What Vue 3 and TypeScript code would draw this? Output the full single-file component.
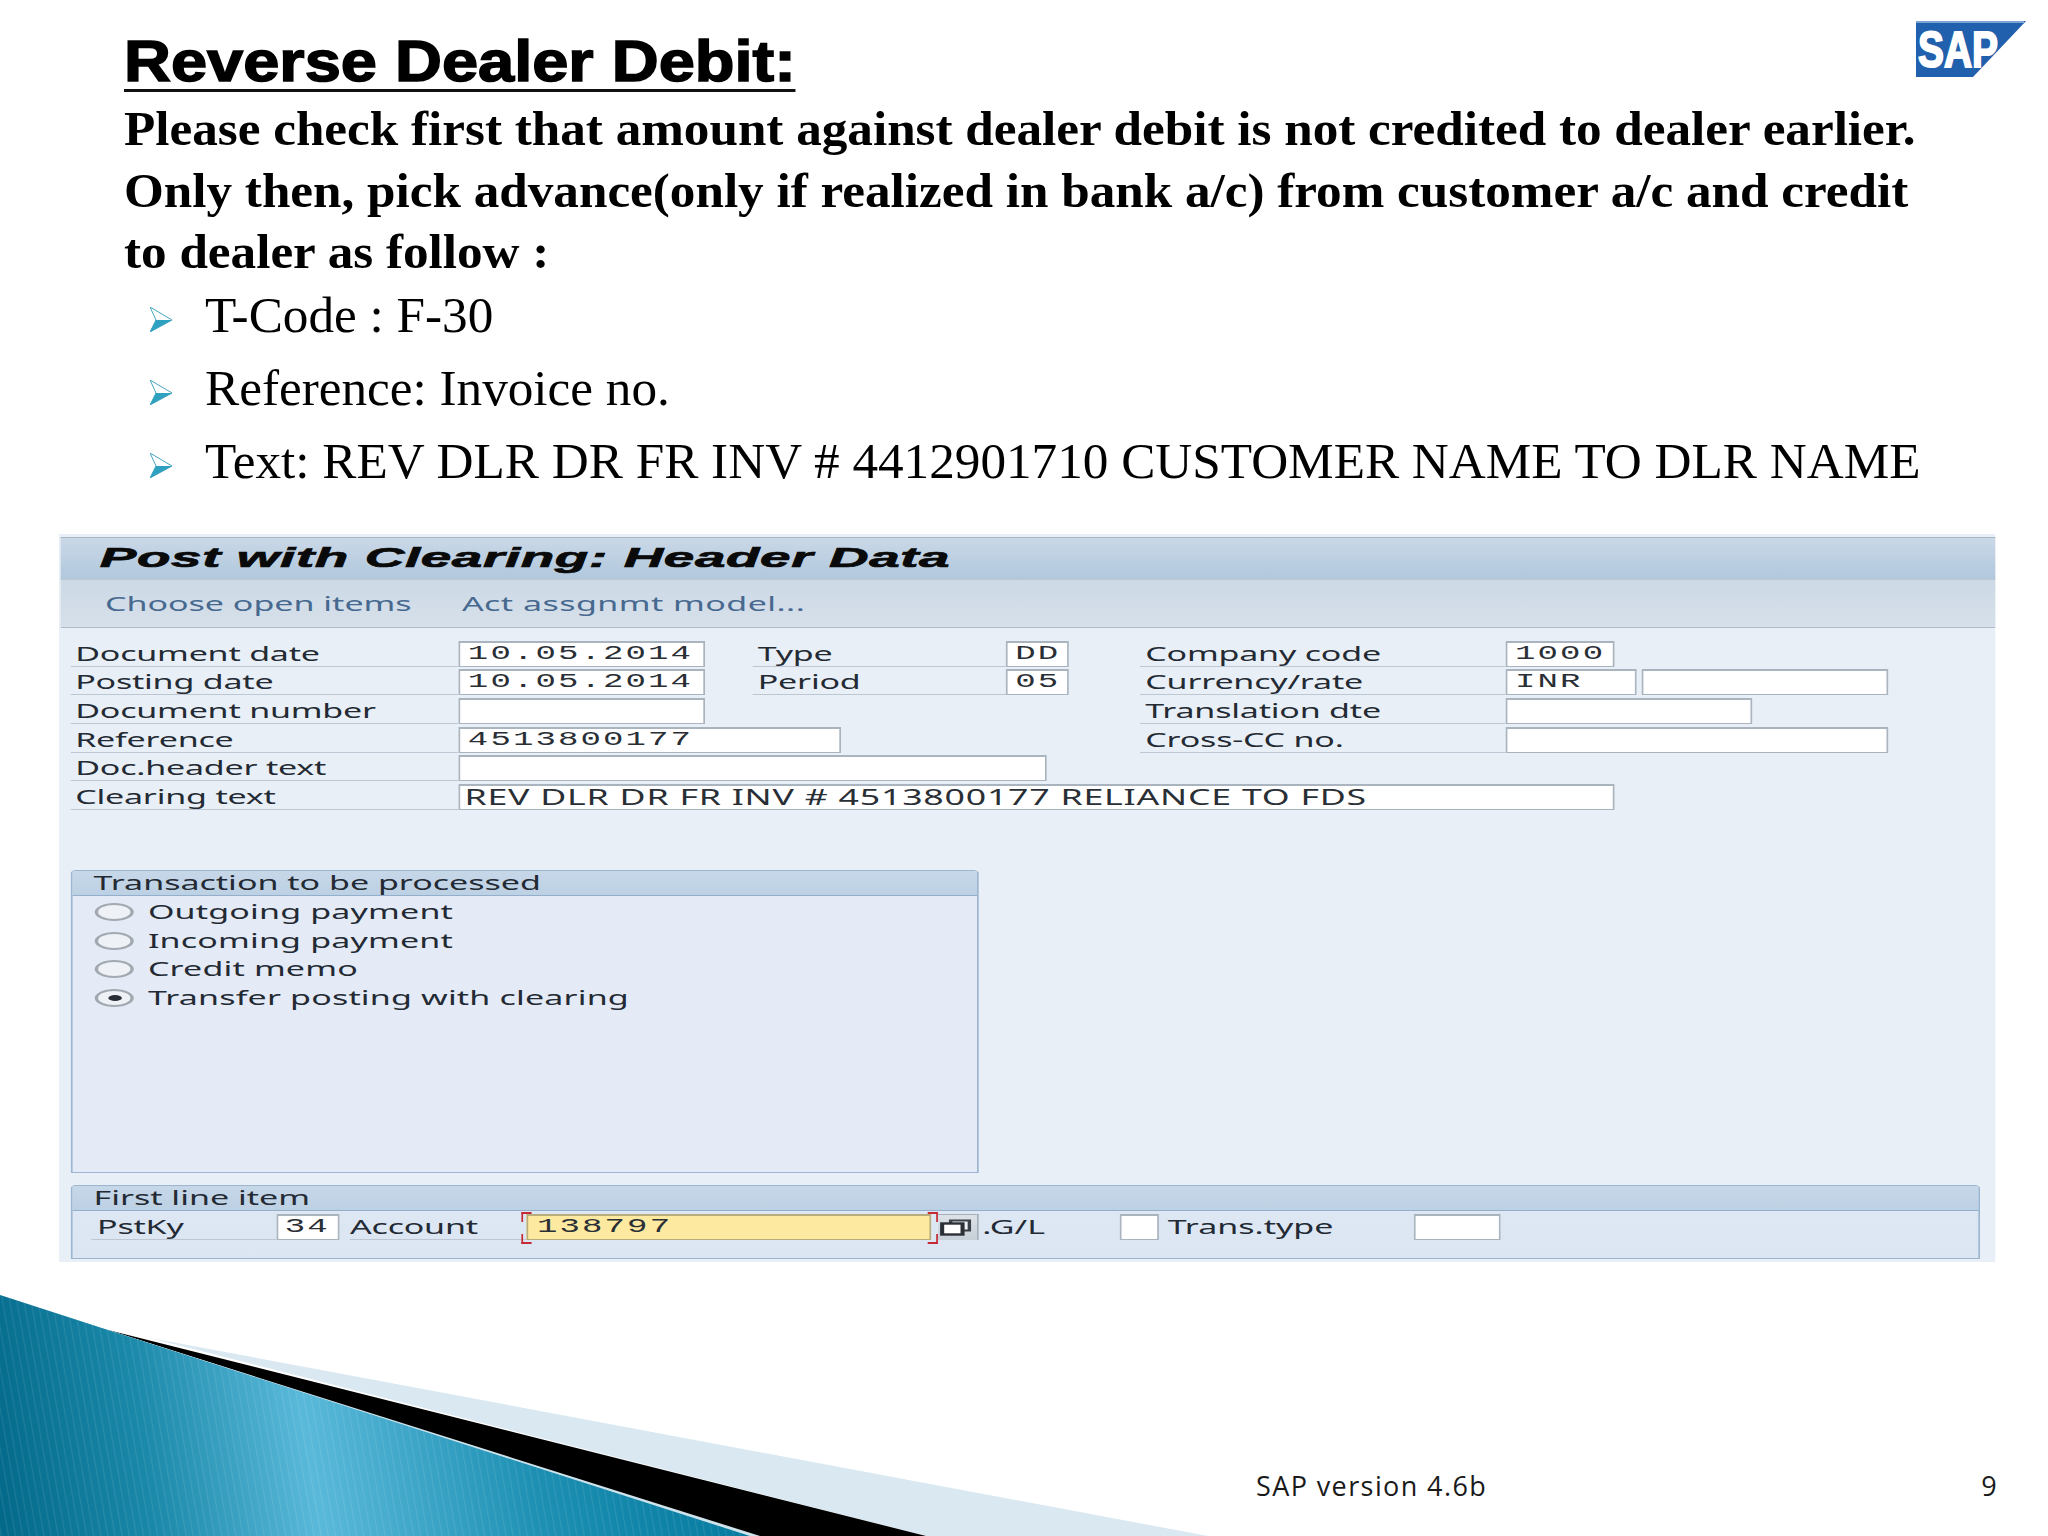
<script setup lang="ts">
interface Field { value?: string; width: number; kind?: string }
interface Pair { label: string; fields: Field[] }

const bullets = [
  'T-Code : F-30',
  'Reference: Invoice no.',
  'Text: REV DLR DR FR INV # 4412901710 CUSTOMER NAME TO DLR NAME'
]

const rows: (Pair | null)[][] = [
  [
    { label: 'Document date', fields: [{ value: '10.05.2014', width: 145.5 }] },
    { label: 'Type', fields: [{ value: 'DD', width: 37.6 }] },
    { label: 'Company code', fields: [{ value: '1000', width: 64.7 }] }
  ],
  [
    { label: 'Posting date', fields: [{ value: '10.05.2014', width: 145.5 }] },
    { label: 'Period', fields: [{ value: '05', width: 37.6 }] },
    { label: 'Currency/rate', fields: [{ value: 'INR', width: 77.6 }, { width: 144.7 }] }
  ],
  [
    { label: 'Document number', fields: [{ width: 145.5 }] },
    null,
    { label: 'Translation dte', fields: [{ width: 145.3 }] }
  ],
  [
    { label: 'Reference', fields: [{ value: '4513800177', width: 225.6 }] },
    null,
    { label: 'Cross-CC no.', fields: [{ width: 225.3 }] }
  ],
  [{ label: 'Doc.header text', fields: [{ width: 346 }] }, null, null],
  [
    {
      label: 'Clearing text',
      fields: [{ value: 'REV DLR DR FR INV # 4513800177 RELIANCE TO FDS', width: 680, kind: 'prop' }]
    },
    null,
    null
  ]
]

const radios = [
  { label: 'Outgoing payment', on: false },
  { label: 'Incoming payment', on: false },
  { label: 'Credit memo', on: false },
  { label: 'Transfer posting with clearing', on: true }
]

const corners = ['tl', 'tr', 'bl', 'br']
</script>

<template>
  <div class="slide">
    <svg class="swoosh" width="1300" height="250" viewBox="0 1286 1300 250">
      <defs>
        <linearGradient id="teal" gradientUnits="userSpaceOnUse" x1="0" y1="1510" x2="740" y2="1400">
          <stop offset="0" stop-color="#03698a" />
          <stop offset="0.2" stop-color="#1a88a9" />
          <stop offset="0.42" stop-color="#5ab9da" />
          <stop offset="0.72" stop-color="#1c8fb2" />
          <stop offset="1" stop-color="#047a9e" />
        </linearGradient>
        <pattern id="stripes" width="7" height="7" patternUnits="userSpaceOnUse" patternTransform="rotate(-10)">
          <rect x="0" y="0" width="1.2" height="7" fill="#ffffff" opacity="0.09" />
        </pattern>
      </defs>
      <polygon points="150,1338 1208,1536 925,1536" fill="#d9e8f1" />
      <polygon points="108,1330 926,1536 752,1536" fill="#000000" />
      <polygon points="0,1295 108,1330 760,1536 752,1536 0,1536" fill="#cfe3ec" />
      <polygon points="0,1295 108,1330 750,1536 0,1536" fill="url(#teal)" />
      <polygon points="0,1295 108,1330 750,1536 0,1536" fill="url(#stripes)" />
    </svg>

    <svg class="logo" width="110" height="56" viewBox="0 0 110 56">
      <polygon points="0,0 110,0 57,56 0,56" fill="#2060ac" />
      <rect width="108" height="2" fill="#7ba3d3" />
      <text x="2" y="46" class="logo-text" textLength="80" lengthAdjust="spacingAndGlyphs">SAP</text>
    </svg>

    <header class="head">
      <h1 class="title">Reverse Dealer Debit:</h1>
      <p class="intro">
        <span>Please check first that amount against dealer debit is not credited to dealer earlier.</span>
        <span>Only then, pick advance(only if realized in bank a/c) from customer a/c and credit</span>
        <span>to dealer as follow :</span>
      </p>
      <ul class="bullets">
        <li v-for="b in bullets" :key="b">
          <svg class="arrow" width="23" height="25" viewBox="0 0 23 25">
            <polygon points="0,0 22,13 0,25 6,13" fill="#ffffff" stroke="#45a5c0" stroke-width="1" />
            <polygon points="6,13 22,13 0,25" fill="#2ea0c0" />
          </svg>
          <span class="bullet-text">{{ b }}</span>
        </li>
      </ul>
    </header>

    <section class="sap-wrap">
      <div class="sap">
        <div class="sap-title"><span>Post with Clearing: Header Data</span></div>
        <div class="sap-tools">
          <span class="tool tool-a">Choose open items</span>
          <span class="tool tool-b">Act assgnmt model...</span>
        </div>

        <div class="form">
          <div v-for="(row, r) in rows" :key="r" class="form-row">
            <div v-for="(pair, p) in row" :key="p" class="pair" :class="'pair-' + p">
              <template v-if="pair">
                <span class="lbl">{{ pair.label }}</span>
                <div class="fields">
                  <div
                    v-for="(f, i) in pair.fields"
                    :key="i"
                    class="inp"
                    :class="f.kind"
                    :style="{ width: f.width + 'px' }"
                  >{{ f.value }}</div>
                </div>
              </template>
            </div>
          </div>
        </div>

        <div class="group group-tx">
          <div class="group-head">Transaction to be processed</div>
          <div class="radios">
            <div v-for="o in radios" :key="o.label" class="radio-row">
              <span class="radio" :class="{ on: o.on }"></span>
              <span>{{ o.label }}</span>
            </div>
          </div>
        </div>

        <div class="group group-line">
          <div class="group-head">First line item</div>
          <div class="line-row">
            <span class="lbl lbl-pst">PstKy</span>
            <div class="inp inp-key">34</div>
            <span class="lbl lbl-acc">Account</span>
            <div class="inp inp-acc">
              138797
              <i v-for="c in corners" :key="c" class="corner" :class="c"></i>
            </div>
            <div class="match">
              <svg width="19" height="17" viewBox="0 0 19 17">
                <rect x="6.5" y="1.5" width="11" height="10" fill="#eef1f4" stroke="#3c4148" stroke-width="2" />
                <rect x="1.5" y="4.5" width="12" height="11" fill="#ffffff" stroke="#2b2f36" stroke-width="2.4" />
              </svg>
            </div>
            <span class="gl">.G/L</span>
            <div class="inp inp-check"></div>
            <span class="trans">Trans.type</span>
            <div class="inp inp-trans"></div>
          </div>
        </div>
      </div>
    </section>

    <footer class="foot">
      <span>SAP version 4.6b</span>
      <span>9</span>
    </footer>
  </div>
</template>

<style>
html,
body {
  margin: 0;
  background: #ffffff;
}
</style>

<style scoped>
.slide {
  position: relative;
  width: 2048px;
  height: 1536px;
  overflow: hidden;
  display: flex;
  flex-direction: column;
  background: #ffffff;
  color: #000000;
}
.swoosh {
  position: absolute;
  left: 0;
  bottom: 0;
}
.logo {
  position: absolute;
  left: 1916px;
  top: 21px;
}
.logo-text {
  font-family: "Liberation Sans", sans-serif;
  font-weight: 700;
  font-size: 50px;
  fill: #ffffff;
  stroke: #ffffff;
  stroke-width: 2px;
}

.head {
  padding: 34px 0 0 124px;
}
.title {
  display: inline-block;
  margin: 0;
  font-family: "Liberation Sans", Arial, sans-serif;
  font-weight: 700;
  font-size: 57px;
  line-height: 55px;
  border-bottom: 3px solid #111111;
  -webkit-text-stroke: 1.5px #000000;
  transform: scaleX(1.14);
  transform-origin: 0 0;
}
.intro {
  margin: 6px 0 0;
  font-family: "Liberation Serif", "Times New Roman", serif;
  font-weight: 700;
  font-size: 48px;
  line-height: 61.5px;
}
.intro span {
  display: block;
  white-space: nowrap;
  transform: scaleX(1.066);
  transform-origin: 0 0;
}
.bullets {
  list-style: none;
  margin: 0;
  padding: 0 0 0 26px;
  display: flex;
  flex-direction: column;
  gap: 8px;
  font-family: "Liberation Serif", "Times New Roman", serif;
  font-size: 50px;
  line-height: 65px;
}
.bullets li {
  display: flex;
  align-items: center;
  white-space: nowrap;
}
.arrow {
  flex: none;
  margin-right: 32px;
  margin-top: 8px;
}
.bullet-text {
  transform: scaleX(1.024);
  transform-origin: 0 0;
}

.sap-wrap {
  margin: 40px 0 0 59px;
  height: 728px;
}
.sap {
  width: 1139px;
  height: 728px;
  box-sizing: border-box;
  padding-top: 3px;
  background: #e9eff6;
  transform: scaleX(1.7);
  transform-origin: 0 0;
  font-family: "Noto Sans", Tahoma, sans-serif;
  font-size: 20px;
  color: #232a33;
}
.sap-title {
  height: 43px;
  display: flex;
  align-items: center;
  padding-left: 22.5px;
  margin-left: 1px;
  background: linear-gradient(#c9d8e7, #b2c8dd);
  border-top: 1px solid #a9b5c1;
  border-bottom: 2px solid #b7c7d6;
  box-sizing: border-box;
  font-family: "Liberation Sans", Arial, sans-serif;
  font-weight: 700;
  font-style: italic;
  font-size: 28px;
  color: #0a0a0a;
  -webkit-text-stroke: 0.7px #0a0a0a;
}
.sap-title span {
  display: inline-block;
  white-space: nowrap;
  letter-spacing: 0.33px;
  transform: scaleX(1.15);
  transform-origin: 0 0;
}
.sap-tools {
  height: 48px;
  display: flex;
  align-items: center;
  margin-left: 1px;
  padding-left: 26px;
  box-sizing: border-box;
  background: linear-gradient(#ccd9e6, #d6e0ea);
  border-bottom: 1px solid #aebdcc;
  font-size: 20px;
  color: #47698f;
}
.tool-a {
  width: 210px;
  white-space: nowrap;
}
.tool {
  white-space: nowrap;
}
.tool-b {
  letter-spacing: 0.27px;
}

.form {
  margin-top: 13px;
  padding-left: 6.5px;
  display: flex;
  flex-direction: column;
  gap: 2.7px;
}
.form-row {
  display: flex;
  height: 26px;
}
.pair {
  display: flex;
  flex: none;
}
.pair-0 {
  width: 401.5px;
}
.pair-1 {
  width: 228px;
}
.pair-0 .lbl {
  width: 228px;
}
.pair-1 .lbl {
  width: 148.5px;
}
.pair-2 .lbl {
  width: 214.5px;
}
.lbl {
  flex: none;
  box-sizing: border-box;
  height: 26px;
  line-height: 26px;
  padding-left: 3px;
  border-bottom: 1px solid #bcc7d3;
  letter-spacing: -0.12px;
  white-space: nowrap;
}
.fields {
  display: flex;
  gap: 3px;
}
.inp {
  flex: none;
  box-sizing: border-box;
  height: 26px;
  padding-left: 5px;
  background: #ffffff;
  border: 1px solid #a9b4bf;
  border-top-width: 2px;
  font-family: "Liberation Mono", "Courier New", monospace;
  font-size: 20px;
  line-height: 22px;
  letter-spacing: 1.25px;
  color: #2a2f36;
  white-space: nowrap;
}
.prop {
  padding-left: 3px;
  font-family: "Noto Sans", Tahoma, sans-serif;
  font-size: 21px;
  line-height: 23px;
  letter-spacing: 0.45px;
}

.group {
  box-sizing: border-box;
  border: 1px solid #9cb6d1;
  border-radius: 3px 3px 0 0;
  background: #e4ebf6;
}
.group-tx {
  margin: 60px 0 0 7px;
  width: 533.5px;
  height: 303px;
}
.group-line {
  margin: 12px 0 0 7px;
  width: 1122.8px;
  height: 74px;
  background: linear-gradient(#dfe8f4, #dbe6f2);
}
.group-head {
  box-sizing: border-box;
  height: 25px;
  padding-left: 12.3px;
  line-height: 24px;
  background: linear-gradient(#c6d7e8, #bdd1e4);
  border-bottom: 1px solid #94afcc;
  white-space: nowrap;
}
.radios {
  display: flex;
  flex-direction: column;
  gap: 2.7px;
  padding: 3px 0 0 12.6px;
}
.radio-row {
  display: flex;
  align-items: center;
  height: 26px;
  line-height: 26px;
  letter-spacing: 0.1px;
  white-space: nowrap;
}
.radio {
  flex: none;
  position: relative;
  box-sizing: border-box;
  width: 23px;
  height: 18px;
  margin-right: 8.7px;
  border: 2px solid #a3a9b0;
  border-radius: 50%;
  background: #eef2f6;
}
.radio.on::after {
  content: "";
  position: absolute;
  left: 6px;
  top: 4px;
  width: 8px;
  height: 6px;
  border-radius: 50%;
  background: #272d36;
}
.line-row {
  display: flex;
  align-items: flex-start;
  padding: 3px 0 0 11.4px;
  height: 30px;
}
.lbl-pst {
  width: 108.4px;
}
.inp-key {
  width: 37.6px;
  padding-left: 4px;
}
.lbl-acc {
  width: 104px;
  margin-left: 5.8px;
  padding-left: 0;
}
.inp-acc {
  position: relative;
  width: 237.6px;
  margin-right: 4.4px;
  background: #fde99f;
  border-color: #b7ad7c;
}
.corner {
  position: absolute;
  width: 5px;
  height: 8px;
  border: 0 solid #c62a32;
}
.corner.tl {
  left: -4px;
  top: -4px;
  border-width: 2px 0 0 1.5px;
}
.corner.tr {
  right: -5px;
  top: -4px;
  border-width: 2px 1.5px 0 0;
}
.corner.bl {
  left: -4px;
  bottom: -5px;
  border-width: 0 0 2px 1.5px;
}
.corner.br {
  right: -5px;
  bottom: -5px;
  border-width: 0 1.5px 2px 0;
}
.match {
  flex: none;
  box-sizing: border-box;
  width: 23.5px;
  height: 26px;
  padding-left: 1px;
  display: flex;
  align-items: center;
  background: linear-gradient(#dde2e8, #c6ced7);
  border-top: 1px solid #a7b1bc;
  border-right: 1px solid #a7b1bc;
}
.gl {
  width: 80.5px;
  margin-left: 2.5px;
  line-height: 26px;
}
.inp-check {
  width: 23px;
  margin-right: 6.5px;
}
.trans {
  width: 144px;
  margin-left: -1px;
  line-height: 26px;
}
.inp-trans {
  width: 51px;
  margin-left: 1px;
}

.foot {
  position: relative;
  margin-top: auto;
  display: flex;
  justify-content: space-between;
  padding: 0 50px 32px 1256px;
  font-family: "Open Sans", sans-serif;
  font-size: 27px;
  line-height: 36px;
  letter-spacing: 1.4px;
  color: #1a1a1a;
}
</style>
